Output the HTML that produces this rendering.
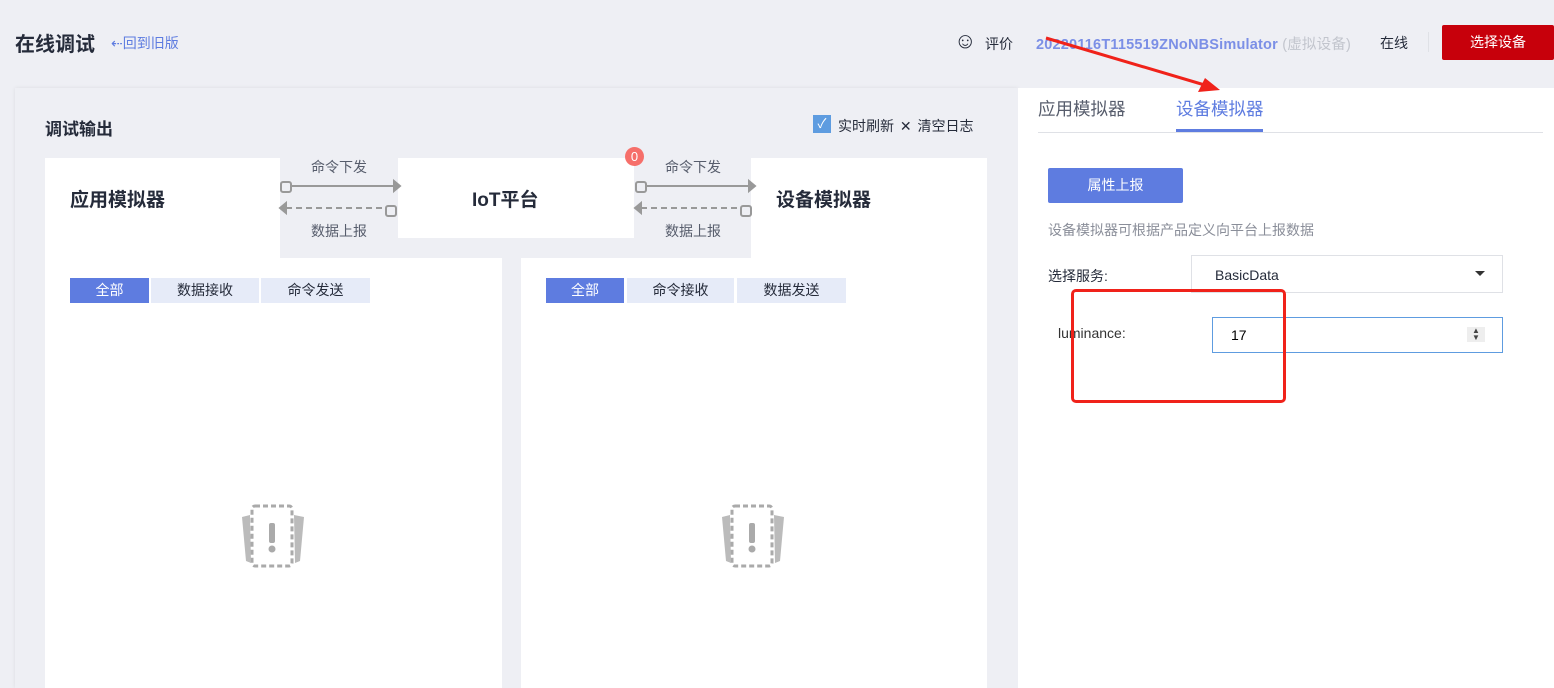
<!DOCTYPE html>
<html><head><meta charset="utf-8"><style>
*{margin:0;padding:0;box-sizing:border-box}
body{width:1554px;height:679px;overflow:hidden;background:#eeeff4;font-family:"Liberation Sans","Noto Sans CJK SC",sans-serif;position:relative;color:#252b3a}
.a{position:absolute}
.w{background:#fff}
.tab{position:absolute;height:25px;font-size:14px;line-height:25px;text-align:center;background:#e6ebf8;color:#252b3a}
.tab.on{background:#5e7ce0;color:#fff}
.lbl{position:absolute;font-size:14px;color:#575d6c;width:118px;text-align:center}
</style></head><body>
<div class="a" style="left:15px;top:28px;font-size:20px;font-weight:bold">在线调试</div>
<div class="a" style="left:111px;top:33px;font-size:14px;color:#5e7ce0">⇠回到旧版</div>
<div class="a" style="left:954px;top:28px;font-size:22px">☺</div>
<div class="a" style="left:985px;top:34px;font-size:14px">评价</div>
<div class="a" style="left:1036px;top:33px;font-size:14.5px;font-weight:bold;color:#7b8fe6;letter-spacing:0.2px">20220116T115519ZNoNBSimulator <span style="font-weight:normal;color:#c2c5cd">(虚拟设备)</span></div>
<div class="a" style="left:1380px;top:33px;font-size:14px">在线</div>
<div class="a" style="left:1428px;top:32px;width:1px;height:20px;background:#dfe1e6"></div>
<div class="a" style="left:1442px;top:25px;width:112px;height:35px;background:#c7000b;border-radius:2px;color:#fff;font-size:14px;line-height:35px;text-align:center">选择设备</div>

<div class="a" style="left:15px;top:88px;width:1003px;height:600px;background:#eeeff4;box-shadow:0 0 4px rgba(0,0,0,.08)"></div>
<div class="a w" style="left:1018px;top:88px;width:536px;height:600px"></div>

<div class="a" style="left:45px;top:115px;font-size:17px;font-weight:bold">调试输出</div>
<div class="a" style="left:813px;top:115px;width:18px;height:18px;background:#5e9ce0;color:#fff;font-size:13px;line-height:18px;text-align:center">✓</div>
<div class="a" style="left:838px;top:116px;font-size:14px;word-spacing:2px">实时刷新 ✕ 清空日志</div>

<div class="a w" style="left:45px;top:158px;width:235px;height:100px"></div>
<div class="a w" style="left:398px;top:158px;width:236px;height:80px"></div>
<div class="a w" style="left:751px;top:158px;width:236px;height:100px"></div>
<div class="a w" style="left:45px;top:258px;width:457px;height:430px"></div>
<div class="a w" style="left:521px;top:258px;width:466px;height:430px"></div>
<div class="a" style="left:70px;top:185px;font-size:19px;font-weight:bold">应用模拟器</div>
<div class="a" style="left:472px;top:185px;font-size:19px;font-weight:bold">IoT平台</div>
<div class="a" style="left:776px;top:185px;font-size:19px;font-weight:bold">设备模拟器</div>
<div class="lbl" style="left:280px;top:157px">命令下发</div>
<div class="lbl" style="left:280px;top:221px">数据上报</div>
<div class="lbl" style="left:634px;top:157px">命令下发</div>
<div class="lbl" style="left:634px;top:221px">数据上报</div>
<svg class="a" style="left:278px;top:176px" width="480" height="44" fill="none" stroke="#999" stroke-width="2">
<g><rect x="3" y="6" width="10" height="10" rx="2"/><line x1="13" y1="10" x2="116" y2="10"/><path d="M116 5 L122 10 L116 15Z" fill="#999"/>
<line x1="8" y1="32" x2="108" y2="32" stroke-dasharray="6 4"/><path d="M8 27 L2 32 L8 37Z" fill="#999"/><rect x="108" y="30" width="10" height="10" rx="2"/></g>
<g transform="translate(355,0)"><rect x="3" y="6" width="10" height="10" rx="2"/><line x1="13" y1="10" x2="116" y2="10"/><path d="M116 5 L122 10 L116 15Z" fill="#999"/>
<line x1="8" y1="32" x2="108" y2="32" stroke-dasharray="6 4"/><path d="M8 27 L2 32 L8 37Z" fill="#999"/><rect x="108" y="30" width="10" height="10" rx="2"/></g>
</svg>
<div class="a" style="left:625px;top:147px;width:19px;height:19px;border-radius:50%;background:#f66f6a;color:#fff;font-size:13px;line-height:19px;text-align:center">0</div>

<div class="tab on" style="left:70px;top:278px;width:79px">全部</div>
<div class="tab" style="left:151px;top:278px;width:108px">数据接收</div>
<div class="tab" style="left:261px;top:278px;width:109px">命令发送</div>
<div class="tab on" style="left:546px;top:278px;width:78px">全部</div>
<div class="tab" style="left:627px;top:278px;width:107px">命令接收</div>
<div class="tab" style="left:737px;top:278px;width:109px">数据发送</div>

<svg class="a" style="left:238px;top:503px" width="70" height="66"><g fill="none" stroke="#aaa" stroke-width="3" stroke-dasharray="5 3"><rect x="14" y="3" width="40" height="60" rx="3"/></g><path d="M12 12 L4 14 L8 58 L13 60Z M56 12 L66 14 L62 58 L57 60Z" fill="#bbb"/><rect x="31" y="20" width="6" height="20" rx="2" fill="#aaa"/><circle cx="34" cy="46" r="3.5" fill="#aaa"/></svg>
<svg class="a" style="left:718px;top:503px" width="70" height="66"><g fill="none" stroke="#aaa" stroke-width="3" stroke-dasharray="5 3"><rect x="14" y="3" width="40" height="60" rx="3"/></g><path d="M12 12 L4 14 L8 58 L13 60Z M56 12 L66 14 L62 58 L57 60Z" fill="#bbb"/><rect x="31" y="20" width="6" height="20" rx="2" fill="#aaa"/><circle cx="34" cy="46" r="3.5" fill="#aaa"/></svg>

<div class="a" style="left:1038px;top:96px;font-size:17.5px;color:#575d6c">应用模拟器</div>
<div class="a" style="left:1176px;top:96px;font-size:17.5px;color:#5e7ce0">设备模拟器</div>
<div class="a" style="left:1038px;top:132px;width:505px;height:1px;background:#dfe1e6"></div>
<div class="a" style="left:1176px;top:129px;width:87px;height:3px;background:#5e7ce0"></div>

<div class="a" style="left:1048px;top:168px;width:135px;height:35px;background:#5e7ce0;color:#fff;font-size:14px;line-height:35px;text-align:center;border-radius:2px">属性上报</div>
<div class="a" style="left:1048px;top:220px;font-size:14px;color:#8a8e99">设备模拟器可根据产品定义向平台上报数据</div>
<div class="a" style="left:1048px;top:266px;font-size:14px">选择服务:</div>
<div class="a" style="left:1191px;top:255px;width:312px;height:38px;border:1px solid #dfe1e6;font-size:14px;line-height:38px;padding-left:23px">BasicData</div>
<div class="a" style="left:1475px;top:271px;width:0;height:0;border-left:5px solid transparent;border-right:5px solid transparent;border-top:5px solid #333"></div>
<div class="a" style="left:1058px;top:325px;font-size:14px;color:#333">luminance:</div>
<div class="a" style="left:1212px;top:317px;width:291px;height:36px;border:1px solid #5e9ce0;font-size:14px;line-height:34px;padding-left:18px;color:#000">17</div>
<div class="a" style="left:1467px;top:327px;width:18px;height:15px;background:#eee;font-size:8px;line-height:7px;text-align:center;color:#444">▲<br>▼</div>

<div class="a" style="left:1071px;top:289px;width:215px;height:114px;border:3px solid #f0221a;border-radius:5px"></div>
<svg class="a" style="left:1040px;top:36px" width="200" height="70"><line x1="6" y1="2" x2="168" y2="50" stroke="#f0221a" stroke-width="3"/><path d="M180 54 L158 56 L165 42Z" fill="#f0221a"/></svg>
</body></html>
